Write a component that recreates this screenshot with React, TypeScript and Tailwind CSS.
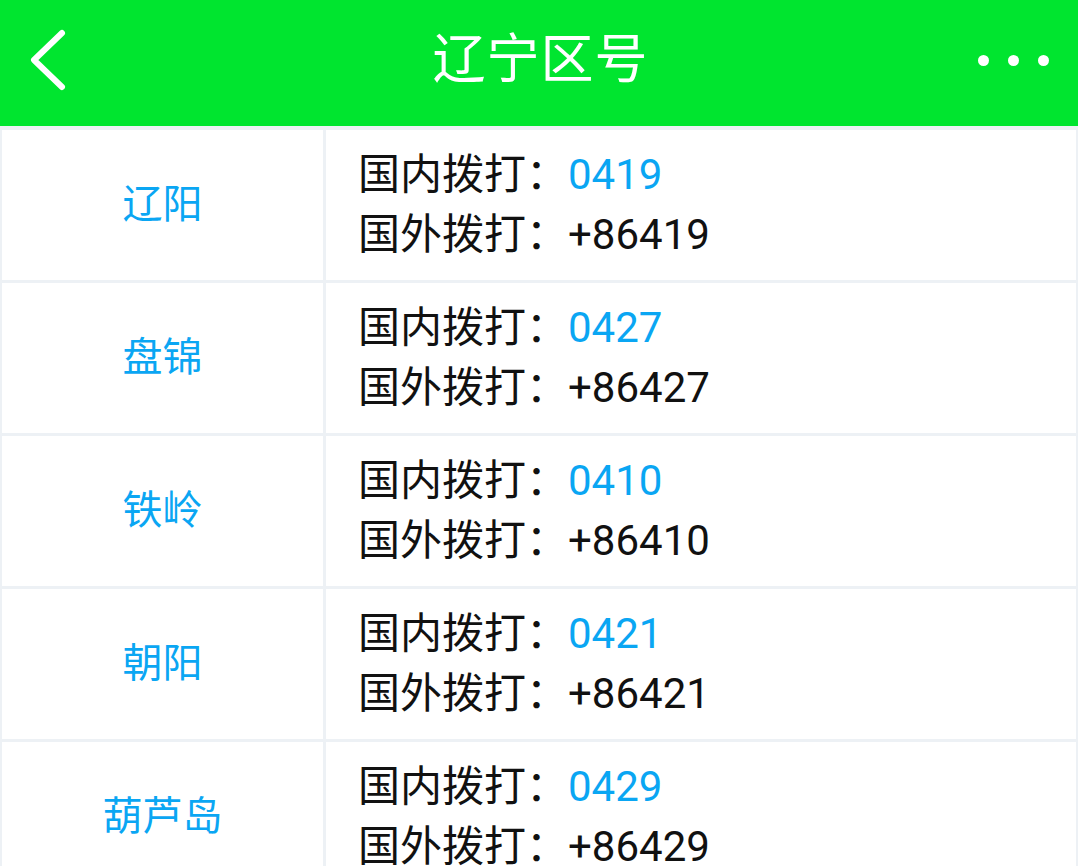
const areas = [
  { city: '辽阳', code: '0419' },
  { city: '盘锦', code: '0427' },
  { city: '铁岭', code: '0410' },
  { city: '朝阳', code: '0421' },
  { city: '葫芦岛', code: '0429' },
];

const font = { fontFamily: 'Roboto, "Noto Sans CJK SC", sans-serif' };

export default function App() {
  return (
    <div className="w-[1078px] h-[866px] overflow-hidden bg-[#edf1f5]" style={font}>
      <header className="h-[126px] bg-[#00e52f] flex items-center justify-between px-[28px] pb-[6px]">
        <svg width="40" height="64" viewBox="0 0 40 64" className="ml-[1px]">
          <path d="M33 5 L5 32 L33 59" fill="none" stroke="white" strokeWidth="6" strokeLinecap="round" strokeLinejoin="round" />
        </svg>
        <h1 className="text-white text-[53px] leading-none tracking-[1px] ml-[34px]">辽宁区号</h1>
        <div className="flex gap-[19px] mr-[1px]">
          <span className="w-[11px] h-[11px] rounded-full bg-white" />
          <span className="w-[11px] h-[11px] rounded-full bg-white" />
          <span className="w-[11px] h-[11px] rounded-full bg-white" />
        </div>
      </header>
      <div className="flex flex-col gap-[3px] px-[2px] pt-[4px]">
        {areas.map((a) => (
          <div key={a.code} className="grid grid-cols-[321px_1fr] gap-[3px] h-[150px]">
            <div className="bg-white flex items-center justify-center text-[40px] text-[#0aa6f3]">
              {a.city}
            </div>
            <div className="bg-white flex flex-col justify-center pl-[32px] text-[42px] leading-[60px] text-[#111]">
              <div>
                国内拨打：<span className="text-[#0aa6f3]">{a.code}</span>
              </div>
              <div>国外拨打：+86{a.code.slice(1)}</div>
            </div>
          </div>
        ))}
      </div>
    </div>
  );
}
